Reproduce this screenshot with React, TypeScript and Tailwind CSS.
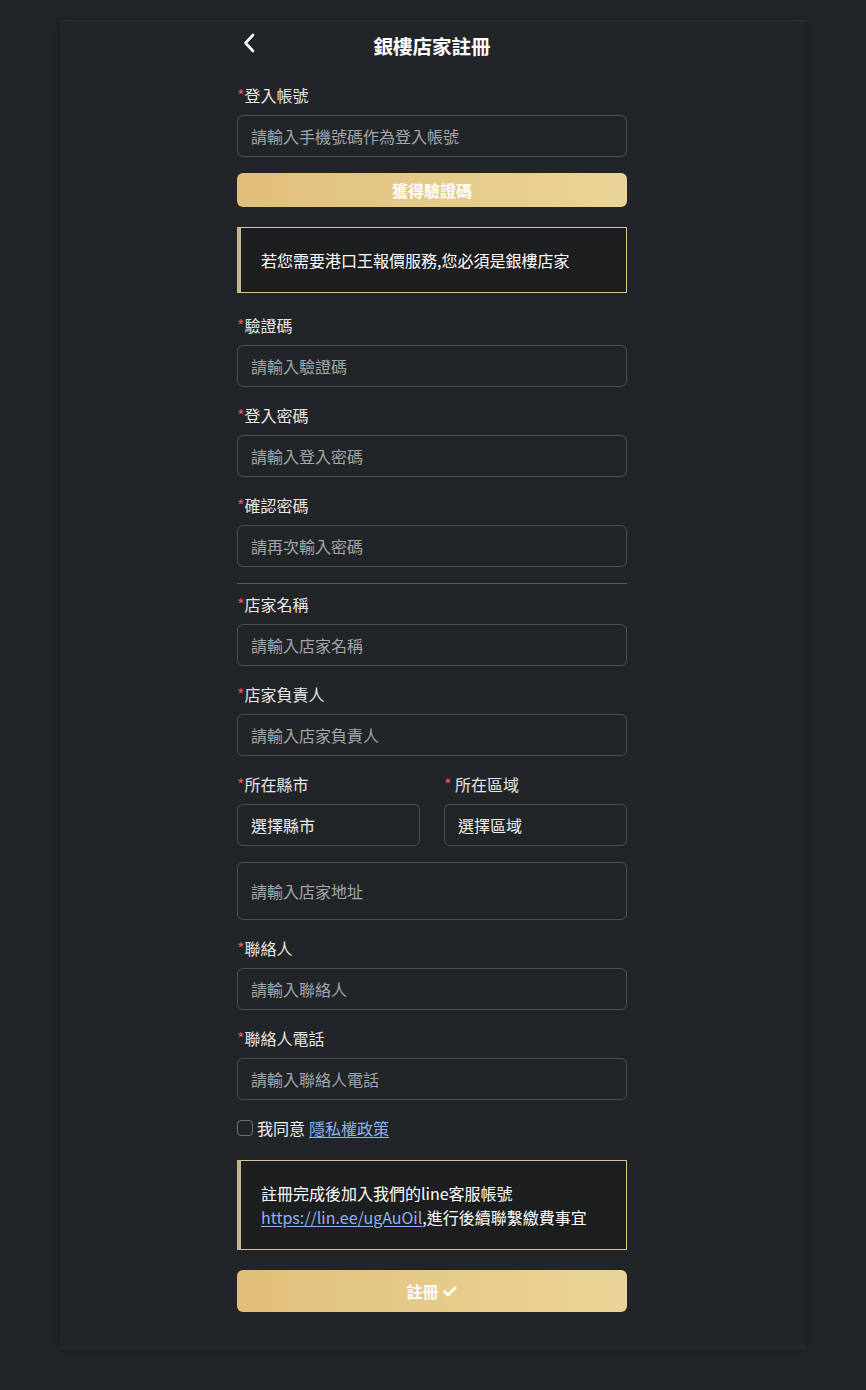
import React from "react";

const font = { fontFamily: '"Noto Sans CJK TC", "Noto Sans", sans-serif' };

function Label({ text, spaced }: { text: string; spaced?: boolean }) {
  return (
    <div className="h-[24px] leading-[24px] text-[16px] text-[#e6e6e6] mb-[8px]">
      <span className="text-[#e0566a]">*</span>
      {spaced ? " " : ""}
      {text}
    </div>
  );
}

function Input({ placeholder, h = "h-[42px]" }: { placeholder: string; h?: string }) {
  return (
    <div
      className={`${h} w-full rounded-[6px] border border-[#4b4e53] bg-[#222528] px-[13px] flex items-center text-[16px] text-[#a2a5aa]`}
    >
      {placeholder}
    </div>
  );
}

function Field({ label, placeholder, spaced }: { label: string; placeholder: string; spaced?: boolean }) {
  return (
    <div>
      <Label text={label} spaced={spaced} />
      <Input placeholder={placeholder} />
    </div>
  );
}

export default function App() {
  return (
    <div className="min-h-[1390px] bg-[#222528] pt-[20px]" style={font}>
      <div className="mx-auto w-[746px] bg-[#222528] border-t border-b border-[#262b35] shadow-[0_0_12px_rgba(20,24,34,0.6)] pt-[12px] pb-[36px] pr-[2px]">
        <div className="mx-auto w-[390px] flex flex-col">
          <div className="relative h-[26px] flex items-center justify-center">
            <svg
              className="absolute left-[5px] top-[0px]"
              width="15"
              height="21"
              viewBox="0 0 15 21"
              fill="none"
              stroke="#ffffff"
              strokeWidth="2.6"
              strokeLinecap="round"
              strokeLinejoin="round"
            >
              <path d="M11 2 L3.5 10 L11 18" />
            </svg>
            <div className="text-[19.5px] font-bold text-white leading-[26px]">銀樓店家註冊</div>
          </div>

          <div className="mt-[24px]">
            <Field label="登入帳號" placeholder="請輸入手機號碼作為登入帳號" />
          </div>

          <div className="mt-[16px] h-[34px] rounded-[6px] bg-gradient-to-r from-[#e1bf7a] to-[#ead598] flex items-center justify-center text-[16px] font-bold text-white">
            獲得驗證碼
          </div>

          <div className="mt-[20px] h-[66px] border border-[#d9c38e] border-l-[4px] border-l-[#c8b48a] bg-[#1d1e20] flex items-center pl-[20px] text-[16px] text-white">
            若您需要港口王報價服務,您必須是銀樓店家
          </div>

          <div className="mt-[20px] flex flex-col gap-[16px]">
            <Field label="驗證碼" placeholder="請輸入驗證碼" />
            <Field label="登入密碼" placeholder="請輸入登入密碼" />
            <Field label="確認密碼" placeholder="請再次輸入密碼" />
          </div>

          <div className="mt-[16px] h-px bg-[#55585d]" />

          <div className="mt-[8px] flex flex-col gap-[16px]">
            <Field label="店家名稱" placeholder="請輸入店家名稱" />
            <Field label="店家負責人" placeholder="請輸入店家負責人" />
            <div className="grid grid-cols-2 gap-[24px]">
              <div>
                <Label text="所在縣市" />
                <div className="h-[42px] rounded-[6px] border border-[#4b4e53] px-[13px] flex items-center text-[16px] text-[#eeeeee]">
                  選擇縣市
                </div>
              </div>
              <div>
                <Label text="所在區域" spaced />
                <div className="h-[42px] rounded-[6px] border border-[#4b4e53] px-[13px] flex items-center text-[16px] text-[#eeeeee]">
                  選擇區域
                </div>
              </div>
            </div>
            <Input placeholder="請輸入店家地址" h="h-[58px]" />
            <Field label="聯絡人" placeholder="請輸入聯絡人" />
            <Field label="聯絡人電話" placeholder="請輸入聯絡人電話" />
          </div>

          <div className="mt-[16px] h-[24px] flex items-center gap-[4px] text-[16px] text-[#eeeeee]">
            <div className="w-[16px] h-[16px] rounded-[4px] border border-[#6a6d72]" />
            <span>我同意</span>
            <span className="text-[#8fb2f0] underline underline-offset-2">隱私權政策</span>
          </div>

          <div className="mt-[20px] h-[90px] border border-[#d9c38e] border-l-[4px] border-l-[#c8b48a] bg-[#1d1e20] flex flex-col justify-center pl-[20px] text-[16px] leading-[24px] text-white">
            <div>註冊完成後加入我們的line客服帳號</div>
            <div>
              <span className="text-[#8fb2f0] underline underline-offset-2">https://lin.ee/ugAuOil</span>,進行後續聯繫繳費事宜
            </div>
          </div>

          <div className="mt-[20px] h-[42px] rounded-[6px] bg-gradient-to-r from-[#e1bf7a] to-[#ead598] flex items-center justify-center gap-[3px] text-[16px] font-bold text-white">
            <span>註冊</span>
            <svg width="16" height="16" viewBox="0 0 16 16" fill="none" stroke="#ffffff" strokeWidth="2.6" strokeLinecap="round" strokeLinejoin="round">
              <path d="M2.5 8.5 L6 12 L13.5 4.5" />
            </svg>
          </div>
        </div>
      </div>
    </div>
  );
}
